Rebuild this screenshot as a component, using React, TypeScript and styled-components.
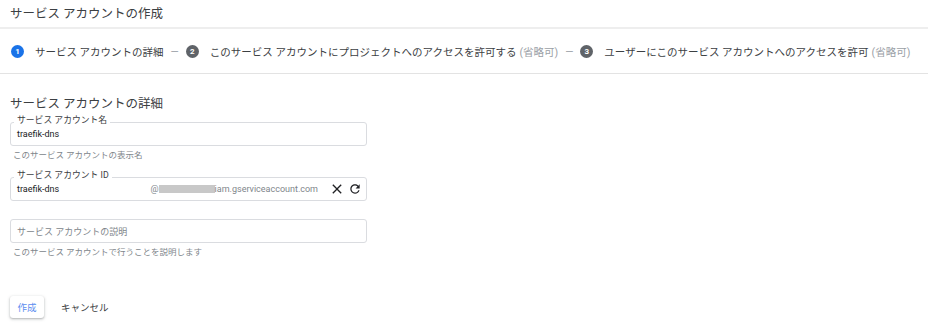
import React from 'react'
import styled, { createGlobalStyle } from 'styled-components'

const GlobalStyle = createGlobalStyle`
  html, body {
    margin: 0;
    padding: 0;
    background: #fff;
  }
  body {
    font-family: Roboto, "Noto Sans CJK JP", sans-serif;
    color: #202124;
  }
`

const Page = styled.div`
  width: 928px;
  height: 326px;
  overflow: hidden;
`

const Header = styled.div`
  height: 25px;
  padding: 0 10px 2px;
  display: flex;
  align-items: center;
  border-bottom: 2px solid #eeeeee;
`

const Title = styled.h1`
  margin: 0;
  font-size: 12.5px;
  font-weight: 400;
  color: #3c4043;
`

const Stepper = styled.div`
  height: 44px;
  padding: 0 11px;
  display: flex;
  align-items: center;
  gap: 7px;
  border-bottom: 1px solid #e3e3e3;
  font-size: 10.5px;
  color: #3c4043;
  white-space: nowrap;
`

const Step = styled.div`
  display: flex;
  align-items: center;
  gap: 11px;
`

const StepNumber = styled.span<{ $active?: boolean }>`
  width: 13px;
  height: 13px;
  border-radius: 50%;
  background: ${({ $active }) => ($active ? '#1a73e8' : '#5f6368')};
  color: #fff;
  font-size: 8px;
  font-weight: 700;
  display: flex;
  align-items: center;
  justify-content: center;
`

const Optional = styled.span`
  color: #9aa0a6;
  margin-left: 3px;
`

const Dash = styled.span`
  color: #9aa0a6;
`

const Content = styled.div`
  padding: 19px 10px 0;
`

const SectionTitle = styled.h2`
  margin: 0 0 10px;
  font-size: 12.5px;
  font-weight: 400;
  color: #3c4043;
`

const FieldGroup = styled.div<{ $gap: number }>`
  width: 357px;
  margin-bottom: ${({ $gap }) => $gap}px;
`

const Box = styled.div`
  position: relative;
  height: 24px;
  border: 1px solid #dadce0;
  border-radius: 3px;
  display: flex;
  align-items: center;
  padding: 0 2px 0 6px;
  box-sizing: border-box;
  font-size: 9px;
`

const Label = styled.span`
  position: absolute;
  top: -8px;
  left: 3px;
  padding: 0 3px;
  background: #fff;
  font-size: 8.8px;
  line-height: 10px;
  color: #3c4043;
`

const Value = styled.span`
  flex: 1;
  color: #202124;
`

const Placeholder = styled.span`
  flex: 1;
  color: #80868b;
`

const Suffix = styled.span`
  display: flex;
  align-items: center;
  color: #80868b;
  margin-right: 10px;
`

const Redacted = styled.span`
  display: inline-block;
  width: 56px;
  height: 8px;
  background: #c8c8c8;
`

const IconButton = styled.span`
  width: 18px;
  height: 18px;
  display: flex;
  align-items: center;
  justify-content: center;
  color: #202124;
`

const Helper = styled.div`
  margin-top: 2px;
  padding-left: 3px;
  font-size: 8.5px;
  color: #80868b;
`

const Actions = styled.div`
  display: flex;
  align-items: center;
  gap: 17px;
  margin-top: 39px;
`

const PrimaryButton = styled.button`
  width: 34px;
  height: 22px;
  border: none;
  border-radius: 3px;
  background: #fff;
  box-shadow: 0 1px 2px rgba(60, 64, 67, 0.3), 0 1px 3px 1px rgba(60, 64, 67, 0.1);
  color: #5b8def;
  font-family: inherit;
  font-size: 9.5px;
  padding: 0;
`

const TextButton = styled.button`
  border: none;
  background: none;
  padding: 0;
  font-family: inherit;
  font-size: 9.5px;
  color: #3c4043;
`

const CloseIcon = () => (
  <svg width="16" height="16" viewBox="0 0 24 24" fill="currentColor">
    <path d="M19 6.41L17.59 5 12 10.59 6.41 5 5 6.41 10.59 12 5 17.59 6.41 19 12 13.41 17.59 19 19 17.59 13.41 12z" />
  </svg>
)

const RefreshIcon = () => (
  <svg width="14" height="14" viewBox="0 0 24 24" fill="currentColor">
    <path d="M17.65 6.35C16.2 4.9 14.21 4 12 4c-4.42 0-7.99 3.58-7.99 8s3.57 8 7.99 8c3.73 0 6.84-2.55 7.73-6h-2.08c-.82 2.33-3.04 4-5.65 4-3.31 0-6-2.69-6-6s2.69-6 6-6c1.66 0 3.14.69 4.22 1.78L13 11h7V4l-2.35 2.35z" />
  </svg>
)

const steps = [
  { n: 1, text: 'サービス アカウントの詳細', optional: false },
  { n: 2, text: 'このサービス アカウントにプロジェクトへのアクセスを許可する', optional: true },
  { n: 3, text: 'ユーザーにこのサービス アカウントへのアクセスを許可', optional: true },
]

const App: React.FC = () => {
  return (
    <Page>
      <GlobalStyle />
      <Header>
        <Title>サービス アカウントの作成</Title>
      </Header>
      <Stepper>
        {steps.map((s, i) => (
          <React.Fragment key={s.n}>
            {i > 0 && <Dash>—</Dash>}
            <Step>
              <StepNumber $active={s.n === 1}>{s.n}</StepNumber>
              <span>
                {s.text}
                {s.optional && <Optional>(省略可)</Optional>}
              </span>
            </Step>
          </React.Fragment>
        ))}
      </Stepper>
      <Content>
        <SectionTitle>サービス アカウントの詳細</SectionTitle>
        <FieldGroup $gap={17}>
          <Box>
            <Label>サービス アカウント名</Label>
            <Value>traefik-dns</Value>
          </Box>
          <Helper>このサービス アカウントの表示名</Helper>
        </FieldGroup>
        <FieldGroup $gap={18}>
          <Box>
            <Label>サービス アカウント ID</Label>
            <Value>traefik-dns</Value>
            <Suffix>
              @<Redacted />iam.gserviceaccount.com
            </Suffix>
            <IconButton>
              <CloseIcon />
            </IconButton>
            <IconButton>
              <RefreshIcon />
            </IconButton>
          </Box>
        </FieldGroup>
        <FieldGroup $gap={0}>
          <Box>
            <Placeholder>サービス アカウントの説明</Placeholder>
          </Box>
          <Helper>このサービス アカウントで行うことを説明します</Helper>
        </FieldGroup>
        <Actions>
          <PrimaryButton>作成</PrimaryButton>
          <TextButton>キャンセル</TextButton>
        </Actions>
      </Content>
    </Page>
  )
}

export default App
